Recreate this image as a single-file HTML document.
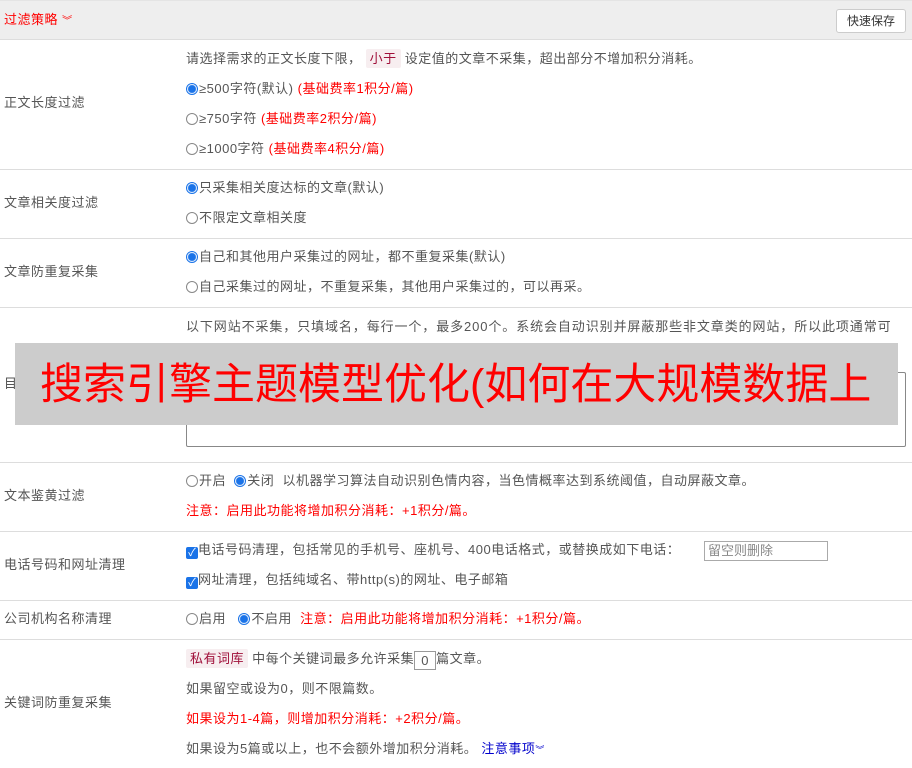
<!DOCTYPE html><html><head><meta charset="utf-8"><style>
*{margin:0;padding:0;box-sizing:border-box}
body{width:912px;height:768px;overflow:hidden;background:#fff;font-family:"Liberation Sans","Noto Sans CJK SC",sans-serif;font-size:13px;color:#555;position:relative}
.a{position:absolute;white-space:nowrap;line-height:16px;letter-spacing:0.5px}
.hd{position:absolute;left:0;top:0;width:912px;height:40px;background:#eee;border-bottom:1px solid #ddd;border-top:1px solid #e4e4e4}
.ln{position:absolute;left:0;width:912px;height:1px;background:#ddd}
.r{color:#f00}
.rd{display:inline-block;width:12px;height:12px;border:1px solid #888;border-radius:50%;vertical-align:-2px;margin-right:1px}
.on{border-color:#1a73e8;background:radial-gradient(#1a73e8 3.5px,#fff 4.5px)}
.cb{display:inline-block;width:12px;height:12px;background:#1a73e8;border-radius:2px;vertical-align:-2px;color:#fff;font-size:11px;line-height:12px;text-align:center;letter-spacing:0}
.tag{background:#f7eef0;color:#a0103a;padding:2px 4px;border-radius:2px}
</style></head><body>
<div class="hd"></div>
<div class="a r" style="left:4px;top:12px">过滤策略 <span style="font-size:10px">︾</span></div>
<div style="position:absolute;left:836px;top:9px;width:70px;height:24px;border:1px solid #ccc;border-radius:3px;background:#fff;font-size:12px;color:#333;text-align:center;line-height:22px">快速保存</div>

<div class="a" style="left:4px;top:95px">正文长度过滤</div>
<div class="a" style="left:186px;top:51px">请选择需求的正文长度下限， <span class="tag">小于</span> 设定值的文章不采集，超出部分不增加积分消耗。</div>
<div class="a" style="left:186px;top:81px"><span class="rd on"></span>≥500字符(默认) <span class="r">(基础费率1积分/篇)</span></div>
<div class="a" style="left:186px;top:111px"><span class="rd"></span>≥750字符 <span class="r">(基础费率2积分/篇)</span></div>
<div class="a" style="left:186px;top:141px"><span class="rd"></span>≥1000字符 <span class="r">(基础费率4积分/篇)</span></div>
<div class="ln" style="top:169px"></div>

<div class="a" style="left:4px;top:195px">文章相关度过滤</div>
<div class="a" style="left:186px;top:180px"><span class="rd on"></span>只采集相关度达标的文章(默认)</div>
<div class="a" style="left:186px;top:210px"><span class="rd"></span>不限定文章相关度</div>
<div class="ln" style="top:238px"></div>

<div class="a" style="left:4px;top:264px">文章防重复采集</div>
<div class="a" style="left:186px;top:249px"><span class="rd on"></span>自己和其他用户采集过的网址，都不重复采集(默认)</div>
<div class="a" style="left:186px;top:279px"><span class="rd"></span>自己采集过的网址，不重复采集，其他用户采集过的，可以再采。</div>
<div class="ln" style="top:307px"></div>

<div class="a" style="left:4px;top:376px">目标网站过滤</div>
<div class="a" style="left:186px;top:319px;letter-spacing:0.9px">以下网站不采集，只填域名，每行一个，最多200个。系统会自动识别并屏蔽那些非文章类的网站，所以此项通常可</div>
<div class="a" style="left:186px;top:348px">以不设置。</div>
<div style="position:absolute;left:186px;top:372px;width:720px;height:75px;border:1px solid #888;border-radius:2px"></div>
<div class="a" style="left:196px;top:378px;color:#999">不想采集的域名，每行一个</div>
<div style="position:absolute;left:15px;top:343px;width:883px;height:82px;background:#ccc"></div>
<div class="a" style="left:40px;top:360px;font-size:43px;line-height:50px;color:#f00;letter-spacing:0">搜索引擎主题模型优化(如何在大规模数据上</div>
<div class="ln" style="top:462px"></div>

<div class="a" style="left:4px;top:488px">文本鉴黄过滤</div>
<div class="a" style="left:186px;top:473px"><span class="rd"></span>开启 &nbsp;<span class="rd on"></span>关闭 &nbsp;以机器学习算法自动识别色情内容，当色情概率达到系统阈值，自动屏蔽文章。</div>
<div class="a r" style="left:186px;top:503px">注意：启用此功能将增加积分消耗：+1积分/篇。</div>
<div class="ln" style="top:531px"></div>

<div class="a" style="left:4px;top:557px">电话号码和网址清理</div>
<div class="a" style="left:186px;top:542px"><span class="cb">✓</span>电话号码清理，包括常见的手机号、座机号、400电话格式，或替换成如下电话：</div>
<div style="position:absolute;left:704px;top:541px;width:124px;height:20px;border:1px solid #aaa;color:#888;padding-left:3px;line-height:18px">留空则删除</div>
<div class="a" style="left:186px;top:572px"><span class="cb">✓</span>网址清理，包括纯域名、带http(s)的网址、电子邮箱</div>
<div class="ln" style="top:600px"></div>

<div class="a" style="left:4px;top:611px">公司机构名称清理</div>
<div class="a" style="left:186px;top:611px"><span class="rd"></span>启用 &nbsp;&nbsp;<span class="rd on"></span>不启用 &nbsp;<span class="r">注意：启用此功能将增加积分消耗：+1积分/篇。</span></div>
<div class="ln" style="top:639px"></div>

<div class="a" style="left:4px;top:695px">关键词防重复采集</div>
<div class="a" style="left:186px;top:651px"><span class="tag">私有词库</span> 中每个关键词最多允许采集<span style="display:inline-block;width:22px;height:19px;border:1px solid #999;text-align:center;line-height:17px;vertical-align:-2px">0</span>篇文章。</div>
<div class="a" style="left:186px;top:681px">如果留空或设为0，则不限篇数。</div>
<div class="a r" style="left:186px;top:711px">如果设为1-4篇，则增加积分消耗：+2积分/篇。</div>
<div class="a" style="left:186px;top:741px">如果设为5篇或以上，也不会额外增加积分消耗。 <span style="color:#00c">注意事项<span style="font-size:9px">︾</span></span></div>
</body></html>
